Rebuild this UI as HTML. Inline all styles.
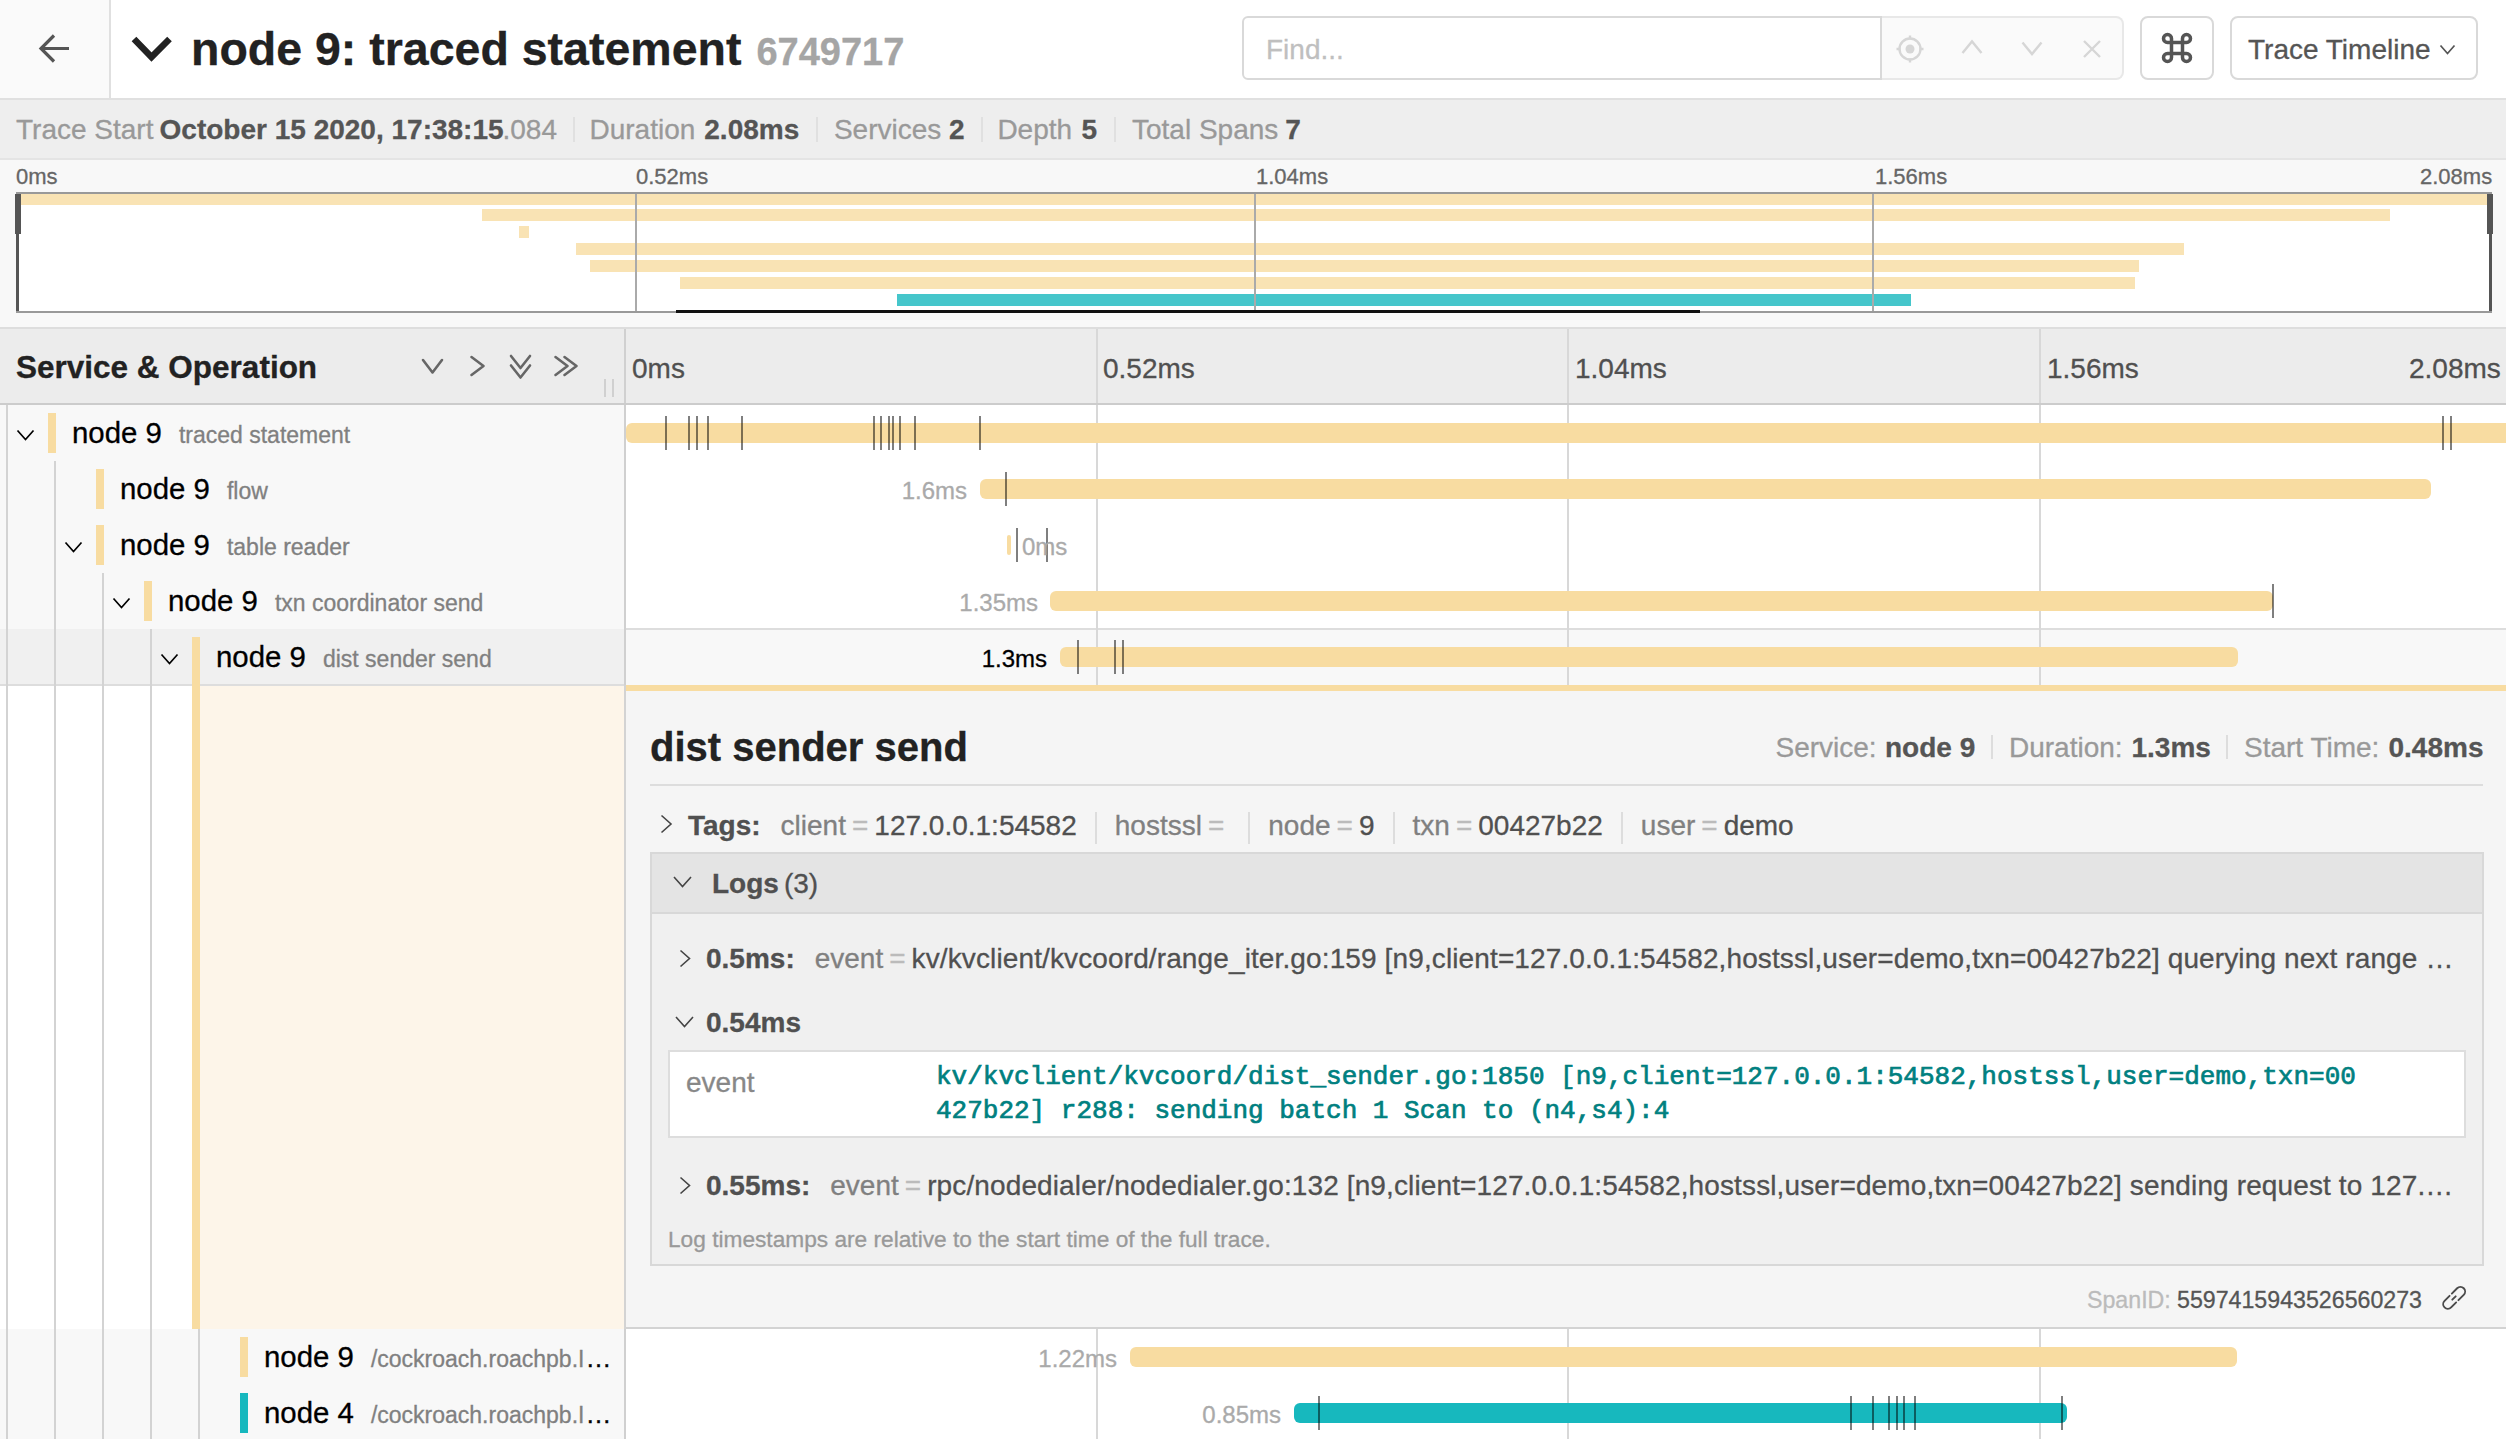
<!DOCTYPE html><html><head><meta charset="utf-8"><style>
*{box-sizing:border-box;margin:0;padding:0}
html,body{width:2506px;height:1439px;overflow:hidden;background:#fff}
body{font-family:"Liberation Sans",sans-serif;color:#000;position:relative;-webkit-text-stroke:0.3px currentColor}
.a{position:absolute}
.nw{white-space:nowrap}
svg{position:absolute;overflow:visible}
#title{left:191px;top:19px;font-size:46.5px;font-weight:bold;color:#222;line-height:60px}
#tid{font-size:38px;color:#a5a5a5;font-weight:bold;margin-left:15px}
#sum{left:0;top:100px;width:2506px;height:58px;background:#eee}
#sum b{color:#555}
#sum .sep{display:inline-block;width:2px;height:30px;background:#ddd;vertical-align:middle;margin:0 17px 0 16px}
.mtk{position:absolute;top:165px;font-size:22px;color:#666;line-height:24px}
.mb{position:absolute;height:12px;background:#f9e3b4}
.mvl{position:absolute;top:194px;width:2px;height:117px;background:#aaa}
.ttk{position:absolute;top:351px;font-size:28px;color:#505050;line-height:36px}
.svc{position:absolute;font-size:29.4px;color:#000;line-height:34px;white-space:nowrap}
.op{font-size:23px;color:#808080;margin-left:17px}
.cbar{position:absolute;width:8px;height:40px}
.guide{position:absolute;width:2px;background:#d3d3d3}
.vt{position:absolute;width:2px;background:#d8d8d8}
.bar{position:absolute;height:20px;border-radius:6px}
.lm{position:absolute;width:2px;height:34px;background:rgba(0,0,0,.5)}
.lbl{position:absolute;font-size:24px;color:#aaa;line-height:24px;white-space:nowrap}
.k{color:#808080}
.eq{color:#bbb;margin:0 6px}
.v{color:#505050}
.dt{font-size:28px;line-height:34px;white-space:nowrap}
.tsep{display:inline-block;width:2px;height:32px;background:#ddd;vertical-align:middle;margin:0 18px}
</style></head><body>
<div class="a" style="left:0;top:0;width:2506px;height:100px;background:#fff;border-bottom:2px solid #e0e0e0"></div>
<div class="a" style="left:0;top:0;width:111px;height:98px;background:#fafafa;border-right:2px solid #e0e0e0"></div>
<svg style="left:39px;top:34px" width="31" height="29"><path d="M15 1.5 L2 14.5 L15 27.5 M2 14.5 L30 14.5" fill="none" stroke="#555" stroke-width="3.2"/></svg>
<svg style="left:131px;top:36px" width="42" height="26"><path d="M3 3 L20.5 21 L38.5 3" fill="none" stroke="#222" stroke-width="6.5"/></svg>
<div id="title" class="a nw">node 9: traced statement<span id="tid">6749717</span></div>
<div class="a" style="left:1242px;top:16px;width:640px;height:64px;border:2px solid #d9d9d9;border-radius:6px 0 0 6px;background:#fff"></div>
<div class="a nw" style="left:1266px;top:33px;font-size:28px;color:#bfbfbf;line-height:34px">Find...</div>
<div class="a" style="left:1882px;top:16px;width:242px;height:64px;border:2px solid #e8e8e8;border-left:none;border-radius:0 8px 8px 0;background:#fafafa"></div>
<svg style="left:1890px;top:29px" width="40" height="40"><circle cx="20" cy="20" r="10.5" fill="none" stroke="#d6d6d6" stroke-width="2.4"/><circle cx="20" cy="20" r="4.5" fill="#d6d6d6"/><path d="M20 6.5v4 M20 29.5v4 M6.5 20h4 M29.5 20h4" stroke="#d6d6d6" stroke-width="2.4"/></svg>
<svg style="left:1960px;top:38px" width="24" height="18"><path d="M2.5 15 L12 3.5 L21.5 15" fill="none" stroke="#d6d6d6" stroke-width="2.4"/></svg>
<svg style="left:2020px;top:40px" width="24" height="18"><path d="M2.5 2.5 L12 14 L21.5 2.5" fill="none" stroke="#d6d6d6" stroke-width="2.4"/></svg>
<svg style="left:2082px;top:39px" width="20" height="20"><path d="M2 2 L18 18 M18 2 L2 18" fill="none" stroke="#d6d6d6" stroke-width="2.4"/></svg>
<div class="a" style="left:2140px;top:16px;width:74px;height:64px;border:2px solid #d9d9d9;border-radius:8px;background:#fff"></div>
<svg style="left:2161px;top:32px" width="32" height="32"><path d="M10.5 10.5 H21.5 V21.5 H10.5 Z M10.5 10.5 V6.5 A4 4 0 1 0 6.5 10.5 H10.5 M21.5 10.5 V6.5 A4 4 0 1 1 25.5 10.5 H21.5 M10.5 21.5 V25.5 A4 4 0 1 1 6.5 21.5 H10.5 M21.5 21.5 V25.5 A4 4 0 1 0 25.5 21.5 H21.5" fill="none" stroke="#555" stroke-width="3.5"/></svg>
<div class="a" style="left:2230px;top:16px;width:248px;height:64px;border:2px solid #d9d9d9;border-radius:8px;background:#fff"></div>
<div class="a nw" style="left:2248px;top:33px;font-size:28px;color:#555;line-height:34px">Trace Timeline</div>
<svg style="left:2439px;top:44px" width="18" height="12"><path d="M1.5 1.5 L8.5 9.5 L15.5 1.5" fill="none" stroke="#555" stroke-width="1.7"/></svg>
<div id="sum" class="a nw"></div>
<div class="a nw" style="left:16px;top:113px;font-size:28px;line-height:34px;color:#999">Trace Start</div>
<div class="a nw" style="left:159.6px;top:113px;font-size:28px;line-height:34px;color:#555;font-weight:bold">October 15 2020, 17:38:15</div>
<div class="a nw" style="left:502.5px;top:113px;font-size:28px;line-height:34px;color:#999">.084</div>
<div class="a nw" style="left:589.5px;top:113px;font-size:28px;line-height:34px;color:#999">Duration</div>
<div class="a nw" style="left:704.3px;top:113px;font-size:28px;line-height:34px;color:#555;font-weight:bold">2.08ms</div>
<div class="a nw" style="left:833.9px;top:113px;font-size:28px;line-height:34px;color:#999">Services</div>
<div class="a nw" style="left:949.1px;top:113px;font-size:28px;line-height:34px;color:#555;font-weight:bold">2</div>
<div class="a nw" style="left:997.4px;top:113px;font-size:28px;line-height:34px;color:#999">Depth</div>
<div class="a nw" style="left:1081.5px;top:113px;font-size:28px;line-height:34px;color:#555;font-weight:bold">5</div>
<div class="a nw" style="left:1132px;top:113px;font-size:28px;line-height:34px;color:#999">Total Spans</div>
<div class="a nw" style="left:1285.2px;top:113px;font-size:28px;line-height:34px;color:#555;font-weight:bold">7</div>
<div class="a" style="left:573px;top:117px;width:2px;height:25px;background:#e0e0e0"></div>
<div class="a" style="left:816px;top:117px;width:2px;height:25px;background:#e0e0e0"></div>
<div class="a" style="left:981px;top:117px;width:2px;height:25px;background:#e0e0e0"></div>
<div class="a" style="left:1114px;top:117px;width:2px;height:25px;background:#e0e0e0"></div>
<div class="a" style="left:0;top:158px;width:2506px;height:2px;background:#e4e4e4"></div>
<div class="a" style="left:0;top:160px;width:2506px;height:169px;background:#f8f8f8;border-bottom:2px solid #ddd"></div>
<div class="mtk" style="left:16px">0ms</div>
<div class="mtk" style="left:636px">0.52ms</div>
<div class="mtk" style="left:1256px">1.04ms</div>
<div class="mtk" style="left:1875px">1.56ms</div>
<div class="mtk" style="left:2420px">2.08ms</div>
<div class="a" style="left:16px;top:192px;width:2476px;height:121px;background:#fff;border:2px solid #999"></div>
<div class="mb" style="left:18px;top:194px;width:2473px;height:11px;background:#f9e3b4"></div>
<div class="mb" style="left:482px;top:209px;width:1908px;height:12px;background:#f9e3b4"></div>
<div class="mb" style="left:519px;top:226px;width:10px;height:12px;background:#f9e3b4"></div>
<div class="mb" style="left:576px;top:243px;width:1608px;height:12px;background:#f9e3b4"></div>
<div class="mb" style="left:590px;top:260px;width:1549px;height:12px;background:#f9e3b4"></div>
<div class="mb" style="left:680px;top:277px;width:1455px;height:12px;background:#f9e3b4"></div>
<div class="mb" style="left:897px;top:294px;width:1014px;height:12px;background:#45c6cb"></div>
<div class="mvl" style="left:635px"></div>
<div class="mvl" style="left:1254px"></div>
<div class="mvl" style="left:1872px"></div>
<div class="a" style="left:15px;top:194px;width:6px;height:40px;background:#555"></div>
<div class="a" style="left:16px;top:194px;width:3px;height:117px;background:#555"></div>
<div class="a" style="left:2487px;top:194px;width:6px;height:40px;background:#555"></div>
<div class="a" style="left:2489px;top:194px;width:3px;height:117px;background:#555"></div>
<div class="a" style="left:676px;top:310px;width:1024px;height:3px;background:#111"></div>
<div class="a" style="left:0;top:329px;width:2506px;height:76px;background:#ececec;border-bottom:2px solid #ccc"></div>
<div class="a nw" style="left:16px;top:347px;font-size:31.5px;font-weight:bold;color:#222;line-height:40px">Service &amp; Operation</div>
<svg style="left:420px;top:357px" width="26" height="18"><path d="M3 3 L12.5 15.5 L22 3" fill="none" stroke="#666" stroke-width="2.6" stroke-linecap="round" stroke-linejoin="round"/></svg>
<svg style="left:468px;top:354px" width="20" height="26"><path d="M3.5 3 L15.5 12 L3.5 21" fill="none" stroke="#666" stroke-width="2.6" stroke-linecap="round" stroke-linejoin="round"/></svg>
<svg style="left:508px;top:353px" width="26" height="26"><path d="M3 3 L12.5 15 L22 3 M3 12.5 L12.5 24.5 L22 12.5" fill="none" stroke="#666" stroke-width="2.6" stroke-linecap="round" stroke-linejoin="round"/></svg>
<svg style="left:552px;top:354px" width="28" height="26"><path d="M3.5 3 L15.5 12 L3.5 21 M12.5 3 L24.5 12 L12.5 21" fill="none" stroke="#666" stroke-width="2.6" stroke-linecap="round" stroke-linejoin="round"/></svg>
<div class="a" style="left:604px;top:379px;width:2px;height:18px;background:#d0d0d0"></div>
<div class="a" style="left:612px;top:379px;width:2px;height:18px;background:#d0d0d0"></div>
<div class="ttk" style="left:632px">0ms</div>
<div class="ttk" style="left:1103px">0.52ms</div>
<div class="ttk" style="left:1575px">1.04ms</div>
<div class="ttk" style="left:2047px">1.56ms</div>
<div class="ttk" style="left:2409px">2.08ms</div>
<div class="a" style="left:624px;top:329px;width:2px;height:74px;background:#d0d0d0"></div>
<div class="vt" style="left:1096px;top:329px;height:74px"></div>
<div class="vt" style="left:1567px;top:329px;height:74px"></div>
<div class="vt" style="left:2039px;top:329px;height:74px"></div>
<div class="a" style="left:0;top:405px;width:626px;height:224px;background:#f8f8f8"></div>
<div class="a" style="left:0;top:629px;width:626px;height:56px;background:#f0f0f0"></div>
<div class="a" style="left:0;top:685px;width:626px;height:644px;background:#fff"></div>
<div class="a" style="left:200px;top:685px;width:426px;height:644px;background:#fdf5e9"></div>
<div class="a" style="left:0;top:1329px;width:626px;height:110px;background:#f8f8f8"></div>
<div class="a" style="left:626px;top:628px;width:1880px;height:57px;background:#f8f8f8;border-top:2px solid #ddd"></div>
<div class="a" style="left:0;top:684px;width:626px;height:2px;background:#ddd"></div>
<div class="guide" style="left:6px;top:405px;height:1034px"></div>
<div class="guide" style="left:54px;top:461px;height:978px"></div>
<div class="guide" style="left:102px;top:573px;height:866px"></div>
<div class="guide" style="left:150px;top:629px;height:810px"></div>
<div class="guide" style="left:198px;top:1329px;height:110px"></div>
<div class="vt" style="left:1096px;top:405px;height:280px"></div>
<div class="vt" style="left:1096px;top:1329px;height:110px"></div>
<div class="vt" style="left:1567px;top:405px;height:280px"></div>
<div class="vt" style="left:1567px;top:1329px;height:110px"></div>
<div class="vt" style="left:2039px;top:405px;height:280px"></div>
<div class="vt" style="left:2039px;top:1329px;height:110px"></div>
<div class="a" style="left:624px;top:405px;width:2px;height:1034px;background:#d0d0d0"></div>
<svg style="left:16px;top:429px" width="20" height="14"><path d="M1.5 1.5 L9.5 10.5 L17.5 1.5" fill="none" stroke="#000" stroke-width="1.7"/></svg>
<div class="cbar" style="left:48px;top:413px;background:#F8DCA1"></div>
<div class="svc" style="left:72px;top:416px">node 9<span class="op">traced statement</span></div>
<div class="cbar" style="left:96px;top:469px;background:#F8DCA1"></div>
<div class="svc" style="left:120px;top:472px">node 9<span class="op">flow</span></div>
<svg style="left:64px;top:541px" width="20" height="14"><path d="M1.5 1.5 L9.5 10.5 L17.5 1.5" fill="none" stroke="#000" stroke-width="1.7"/></svg>
<div class="cbar" style="left:96px;top:525px;background:#F8DCA1"></div>
<div class="svc" style="left:120px;top:528px">node 9<span class="op">table reader</span></div>
<svg style="left:112px;top:597px" width="20" height="14"><path d="M1.5 1.5 L9.5 10.5 L17.5 1.5" fill="none" stroke="#000" stroke-width="1.7"/></svg>
<div class="cbar" style="left:144px;top:581px;background:#F8DCA1"></div>
<div class="svc" style="left:168px;top:584px">node 9<span class="op">txn coordinator send</span></div>
<svg style="left:160px;top:653px" width="20" height="14"><path d="M1.5 1.5 L9.5 10.5 L17.5 1.5" fill="none" stroke="#000" stroke-width="1.7"/></svg>
<div class="cbar" style="left:192px;top:637px;background:#F8DCA1"></div>
<div class="svc" style="left:216px;top:640px">node 9<span class="op">dist sender send</span></div>
<div class="cbar" style="left:240px;top:1337px;background:#F8DCA1"></div>
<div class="svc" style="left:264px;top:1340px">node 9<span class="op">/cockroach.roachpb.I<span style="color:#000;font-size:26px;margin-left:1px">…</span></span></div>
<div class="cbar" style="left:240px;top:1393px;background:#17B8BE"></div>
<div class="svc" style="left:264px;top:1396px">node 4<span class="op">/cockroach.roachpb.I<span style="color:#000;font-size:26px;margin-left:1px">…</span></span></div>
<div class="cbar" style="left:192px;top:637px;height:692px;background:#F8DCA1"></div>
<div class="bar" style="left:626px;top:423px;width:1880px;background:#F8DCA1;border-radius:6px 0 0 6px"></div>
<div class="lm" style="left:665px;top:416px"></div>
<div class="lm" style="left:688px;top:416px"></div>
<div class="lm" style="left:696px;top:416px"></div>
<div class="lm" style="left:707px;top:416px"></div>
<div class="lm" style="left:741px;top:416px"></div>
<div class="lm" style="left:873px;top:416px"></div>
<div class="lm" style="left:880px;top:416px"></div>
<div class="lm" style="left:888px;top:416px"></div>
<div class="lm" style="left:892px;top:416px"></div>
<div class="lm" style="left:899px;top:416px"></div>
<div class="lm" style="left:914px;top:416px"></div>
<div class="lm" style="left:979px;top:416px"></div>
<div class="lm" style="left:2442px;top:416px"></div>
<div class="lm" style="left:2450px;top:416px"></div>
<div class="lbl" style="right:1539px;top:479px;color:#aaa">1.6ms</div>
<div class="bar" style="left:980px;top:479px;width:1451px;background:#F8DCA1;border-radius:6px"></div>
<div class="lm" style="left:1005px;top:472px"></div>
<div class="bar" style="left:1007px;top:535px;width:4px;background:#F8DCA1;border-radius:3px"></div>
<div class="lm" style="left:1016px;top:528px"></div>
<div class="lm" style="left:1046px;top:528px"></div>
<div class="lbl" style="left:1022px;top:535px">0ms</div>
<div class="lbl" style="right:1468px;top:591px;color:#aaa">1.35ms</div>
<div class="bar" style="left:1050px;top:591px;width:1223px;background:#F8DCA1;border-radius:6px"></div>
<div class="lm" style="left:2272px;top:584px"></div>
<div class="lbl" style="right:1459px;top:647px;color:#000">1.3ms</div>
<div class="bar" style="left:1060px;top:647px;width:1178px;background:#F8DCA1;border-radius:6px"></div>
<div class="lm" style="left:1077px;top:640px"></div>
<div class="lm" style="left:1114px;top:640px"></div>
<div class="lm" style="left:1122px;top:640px"></div>
<div class="lbl" style="right:1389px;top:1347px;color:#aaa">1.22ms</div>
<div class="bar" style="left:1130px;top:1347px;width:1107px;background:#F8DCA1;border-radius:6px"></div>
<div class="lbl" style="right:1225px;top:1403px;color:#aaa">0.85ms</div>
<div class="bar" style="left:1294px;top:1403px;width:773px;background:#17B8BE;border-radius:6px"></div>
<div class="lm" style="left:1318px;top:1396px"></div>
<div class="lm" style="left:1850px;top:1396px"></div>
<div class="lm" style="left:1872px;top:1396px"></div>
<div class="lm" style="left:1888px;top:1396px"></div>
<div class="lm" style="left:1896px;top:1396px"></div>
<div class="lm" style="left:1903px;top:1396px"></div>
<div class="lm" style="left:1914px;top:1396px"></div>
<div class="lm" style="left:2061px;top:1396px"></div>
<div class="a" style="left:624px;top:685px;width:1882px;height:644px;background:#f5f5f5;border-left:2px solid #d3d3d3;border-bottom:2px solid #d3d3d3"></div>
<div class="a" style="left:626px;top:685px;width:1880px;height:6px;background:#F8DCA1"></div>
<div class="a nw" style="left:650px;top:723px;font-size:40px;font-weight:bold;color:#222;line-height:48px">dist sender send</div>
<div class="a nw dt" style="left:1775.5px;top:731px;color:#999">Service:</div>
<div class="a nw dt" style="left:1885px;top:731px;color:#555;font-weight:bold">node 9</div>
<div class="a nw dt" style="left:2009px;top:731px;color:#999">Duration:</div>
<div class="a nw dt" style="left:2131.5px;top:731px;color:#555;font-weight:bold">1.3ms</div>
<div class="a nw dt" style="left:2244px;top:731px;color:#999">Start Time:</div>
<div class="a nw dt" style="left:2388.5px;top:731px;color:#555;font-weight:bold">0.48ms</div>
<div class="a" style="left:1991px;top:735px;width:2px;height:24px;background:#ddd"></div>
<div class="a" style="left:2226px;top:735px;width:2px;height:24px;background:#ddd"></div>
<div class="a" style="left:650px;top:784px;width:1833px;height:2px;background:#ddd"></div>
<svg style="left:658px;top:813px" width="18" height="22"><path d="M3.5 2.5 L13 11 L3.5 19.5" fill="none" stroke="#444" stroke-width="1.6"/></svg>
<div class="a nw dt" style="left:688px;top:809px"><b style="color:#505050">Tags:</b><span style="display:inline-block;width:20px"></span><span class="k">client</span><span class="eq">=</span><span class="v">127.0.0.1:54582</span><span class="tsep"></span><span class="k">hostssl</span><span class="eq">=</span><span class="tsep"></span><span class="k">node</span><span class="eq">=</span><span class="v">9</span><span class="tsep"></span><span class="k">txn</span><span class="eq">=</span><span class="v">00427b22</span><span class="tsep"></span><span class="k">user</span><span class="eq">=</span><span class="v">demo</span></div>
<div class="a" style="left:650px;top:852px;width:1834px;height:414px;background:#f0f0f0;border:2px solid #d8d8d8"></div>
<div class="a" style="left:652px;top:854px;width:1830px;height:60px;background:#e4e4e4;border-bottom:2px solid #d8d8d8"></div>
<svg style="left:672px;top:875px" width="22" height="16"><path d="M2 2 L10.5 11.5 L19 2" fill="none" stroke="#444" stroke-width="1.6"/></svg>
<div class="a nw dt" style="left:712px;top:867px;color:#505050"><b>Logs</b><span style="margin-left:5px">(3)</span></div>
<svg style="left:677px;top:948px" width="18" height="22"><path d="M3.5 2.5 L12.5 10.5 L3.5 18.5" fill="none" stroke="#444" stroke-width="1.6"/></svg>
<div class="a nw dt" style="left:706px;top:942px;width:1750px;overflow:hidden;text-overflow:ellipsis"><b style="color:#505050">0.5ms:</b><span style="display:inline-block;width:20px"></span><span class="k">event</span><span class="eq">=</span><span class="v" style="letter-spacing:0.12px">kv/kvclient/kvcoord/range_iter.go:159 [n9,client=127.0.0.1:54582,hostssl,user=demo,txn=00427b22] querying next range …</span></div>
<svg style="left:674px;top:1015px" width="22" height="16"><path d="M2 2 L10.5 11.5 L19 2" fill="none" stroke="#444" stroke-width="1.6"/></svg>
<div class="a nw dt" style="left:706px;top:1006px;color:#505050"><b>0.54ms</b></div>
<div class="a" style="left:668px;top:1050px;width:1798px;height:88px;background:#fff;border:2px solid #ddd"></div>
<div class="a nw dt" style="left:686px;top:1066px;color:#888">event</div>
<div class="a" style="left:936px;top:1060px;font-family:'Liberation Mono',monospace;font-weight:normal;-webkit-text-stroke:0.7px #008080;font-size:26px;line-height:34px;color:#008080;white-space:pre">kv/kvclient/kvcoord/dist_sender.go:1850 [n9,client=127.0.0.1:54582,hostssl,user=demo,txn=00
427b22] r288: sending batch 1 Scan to (n4,s4):4</div>
<svg style="left:677px;top:1175px" width="18" height="22"><path d="M3.5 2.5 L12.5 10.5 L3.5 18.5" fill="none" stroke="#444" stroke-width="1.6"/></svg>
<div class="a nw dt" style="left:706px;top:1169px;width:1750px;overflow:hidden;text-overflow:ellipsis"><b style="color:#505050">0.55ms:</b><span style="display:inline-block;width:20px"></span><span class="k">event</span><span class="eq">=</span><span class="v" style="letter-spacing:0.12px">rpc/nodedialer/nodedialer.go:132 [n9,client=127.0.0.1:54582,hostssl,user=demo,txn=00427b22] sending request to 127.…</span></div>
<div class="a nw" style="left:668px;top:1225px;font-size:22.7px;line-height:28px;color:#999">Log timestamps are relative to the start time of the full trace.</div>
<div class="a nw" style="left:2087px;top:1286px;font-size:23.2px;line-height:28px;color:#bbb">SpanID:</div>
<div class="a nw" style="left:2177px;top:1286px;font-size:23.2px;line-height:28px;color:#555">5597415943526560273</div>
<svg style="left:2441px;top:1284.5px" width="26" height="26"><g transform="rotate(-45 13 13)" fill="none" stroke="#4a4a4a" stroke-width="1.9" stroke-linecap="round"><path d="M14.6 8.35 H22.1 A4.65 4.65 0 0 1 22.1 17.65 H14.6"/><path d="M11.4 8.35 H4.3 A4.65 4.65 0 0 0 4.3 17.65 H11.4"/><path d="M10.6 13 H15.4"/></g></svg>
</body></html>
